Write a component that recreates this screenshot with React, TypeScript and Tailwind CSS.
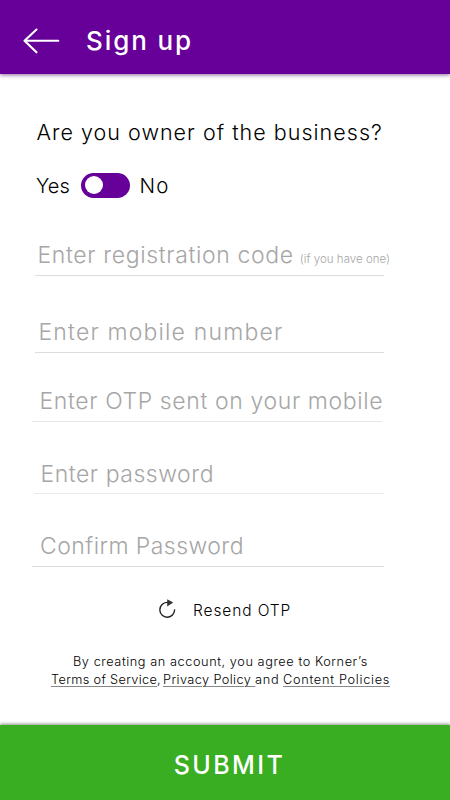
type FieldProps = {
  label: string;
  hint?: string;
  className: string;
};

function Field({ label, hint, className }: FieldProps) {
  return (
    <div className={`flex items-center whitespace-nowrap border-b pt-[2px] text-[23px] font-light leading-none text-[#a6a6a6] ${className}`}>
      <span>{label}</span>
      {hint && (
        <span className="ml-[6px] mt-[8px] text-[11.5px] leading-none tracking-[0.02px]">{hint}</span>
      )}
    </div>
  );
}

function BackArrow() {
  return (
    <svg className="ml-[23px] shrink-0" width="37" height="26" viewBox="0 0 37 26" fill="none" stroke="#fff" strokeWidth="2.1" strokeLinecap="round" strokeLinejoin="round">
      <path d="M35.3 12.7H1.5M13.5 1.5L1.5 12.7L13.5 24.3" />
    </svg>
  );
}

function ResendIcon() {
  return (
    <svg width="18" height="20" viewBox="0 0 18 20" fill="none">
      <path d="M10 3.4H9A7.4 7.4 0 1 0 16.6 10.4" stroke="#222" strokeWidth="1.4" />
      <path d="M9.2 0.3L15.2 3.6L9.2 7.4Z" fill="#333" />
    </svg>
  );
}

export default function App() {
  return (
    <div className="flex h-[800px] w-[450px] flex-col overflow-hidden bg-white font-['Inter','Open_Sans',sans-serif] text-black">
      <header className="flex h-[74px] shrink-0 items-center bg-[#660099] pt-[7px] shadow-[0_1px_4px_rgba(60,0,90,0.6)]">
        <BackArrow />
        <h1 className="ml-[26px] whitespace-nowrap text-[26px] font-[450] leading-none tracking-[1.9px] text-white">Sign up</h1>
      </header>

      <main className="flex-1">
        <p className="ml-[36.5px] mt-[42px] h-8 whitespace-nowrap text-[21.5px] font-[350] leading-8 tracking-[1.02px]">
          Are you owner of the business?
        </p>
        <div className="ml-[36px] mt-[22px] flex h-8 items-center whitespace-nowrap text-[20px] font-light">
          <span className="w-[45px]">Yes</span>
          <button type="button" role="switch" aria-checked="false" aria-label="Business owner" className="mb-[2px] flex h-[25px] w-[49px] items-center rounded-full bg-[#660099] pl-[4px]">
            <span className="size-[18px] rounded-full bg-white" />
          </button>
          <span className="ml-[9.5px] text-[20.5px] tracking-[1.2px]">No</span>
        </div>

        <Field label="Enter registration code" hint="(if you have one)" className="ml-[35px] mt-[32px] h-[42px] w-[349px] border-[#dcdcdc] pl-[2.5px] tracking-[0.64px]" />
        <Field label="Enter mobile number" className="ml-[35px] mt-[35px] h-[42px] w-[349px] border-[#dcdcdc] pl-[3.5px] tracking-[1.17px]" />
        <Field label="Enter OTP sent on your mobile" className="ml-[32px] mt-[27px] h-[42px] w-[350px] border-[#e6e6e6] pl-[7.5px] tracking-[0.62px]" />
        <Field label="Enter password" className="ml-[34px] mt-[32px] h-[40px] w-[350px] border-[#e9e9e9] pl-[6.5px] tracking-[0.53px]" />
        <Field label="Confirm Password" className="ml-[32px] mt-[31px] h-[42px] w-[352px] border-[#dcdcdc] pl-[8px] tracking-[0.45px]" />

        <button type="button" className="ml-[158px] mt-[32px] flex h-6 items-center whitespace-nowrap text-[15.5px] font-light tracking-[0.9px]">
          <span className="mb-[5px]"><ResendIcon /></span>
          <span className="ml-[17px]">Resend OTP</span>
        </button>

        <div className="mt-[30px] whitespace-nowrap text-[12.75px] font-light leading-[18px]">
          <p className="ml-[73px] tracking-[0.56px]">By creating an account, you agree to Korner’s</p>
          <p className="ml-[51px] flex">
            <a className="w-[106px] tracking-[0.34px] underline decoration-[#888] decoration-1 underline-offset-[2px]">Terms of Service</a>
            <span className="w-[6px]">,</span>
            <a className="w-[92px] whitespace-pre tracking-[0.4px] underline decoration-[#888] decoration-1 underline-offset-[2px]">{"Privacy Policy "}</a>
            <span className="w-[28px] tracking-[0.7px]">and</span>
            <a className="tracking-[0.7px] underline decoration-[#888] decoration-1 underline-offset-[2px]">Content Policies</a>
          </p>
        </div>
      </main>

      <footer className="flex h-[75px] shrink-0 flex-col bg-[#39ae22] shadow-[0_-1px_3px_rgba(0,0,0,0.45)]">
        <button type="button" className="h-full w-full whitespace-nowrap pl-[9px] pt-[5px] text-[25px] font-[550] leading-none tracking-[2.4px] text-white">
          SUBMIT
        </button>
      </footer>
    </div>
  );
}
